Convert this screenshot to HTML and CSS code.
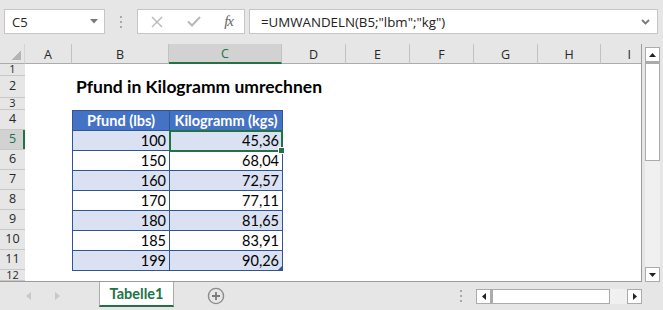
FILE: index.html
```html
<!doctype html>
<html lang="de">
<head>
	<meta charset="UTF-8">
	<title>Pfund in Kilogramm umrechnen</title>
	<link rel="stylesheet" href="styles.css">
</head>
<body>
	<div class="topbar">
		<div class="namebox">
			<span>C5</span>
			<svg class="caret" width="8" height="5" viewBox="0 0 8 5"><path d="M0 0H8L4 4.5Z" fill="#7a7a7a"/></svg>
		</div>
		<div class="grip"><i></i><i></i><i></i></div>
		<div class="fxbox">
			<svg width="12" height="12" viewBox="0 0 12 12"><path d="M1 1L11 11M11 1L1 11" stroke="#b8b8b8" stroke-width="1.4" fill="none"/></svg>
			<svg width="14" height="11" viewBox="0 0 14 11"><path d="M1 5.5L5 9.5L13 1" stroke="#b8b8b8" stroke-width="2" fill="none"/></svg>
			<span class="fx">fx</span>
		</div>
		<div class="formula">
			<span>=UMWANDELN(B5;"lbm";"kg")</span>
			<svg width="9" height="6" viewBox="0 0 9 6"><path d="M1 1L4.5 4.5L8 1" stroke="#7a7a7a" stroke-width="1.8" fill="none"/></svg>
		</div>
	</div>

	<div class="main">
		<div class="sheet">
			<div class="corner"></div>
			<div class="colhead">A</div>
			<div class="colhead">B</div>
			<div class="colhead active">C</div>
			<div class="colhead">D</div>
			<div class="colhead">E</div>
			<div class="colhead">F</div>
			<div class="colhead">G</div>
			<div class="colhead">H</div>
			<div class="colhead last">I</div>

			<div class="rowhead small">1</div>
			<div class="rowhead">2</div>
			<div class="rowhead small">3</div>
			<div class="rowhead">4</div>
			<div class="rowhead active">5</div>
			<div class="rowhead">6</div>
			<div class="rowhead">7</div>
			<div class="rowhead">8</div>
			<div class="rowhead">9</div>
			<div class="rowhead">10</div>
			<div class="rowhead">11</div>
			<div class="rowhead small">12</div>

			<div class="title">Pfund in Kilogramm umrechnen</div>

			<table class="data">
				<colgroup><col class="colb"><col class="colc"></colgroup>
				<tr class="head"><th>Pfund (lbs)</th><th>Kilogramm (kgs)</th></tr>
				<tr class="odd"><td>100</td><td class="sel">45,36</td></tr>
				<tr><td>150</td><td>68,04</td></tr>
				<tr class="odd"><td>160</td><td>72,57</td></tr>
				<tr><td>170</td><td>77,11</td></tr>
				<tr class="odd"><td>180</td><td>81,65</td></tr>
				<tr><td>185</td><td>83,91</td></tr>
				<tr class="odd"><td>199</td><td class="end">90,26</td></tr>
			</table>
		</div>

		<div class="vscroll">
			<div class="btn"><svg width="7" height="4" viewBox="0 0 7 4"><path d="M0 4H7L3.5 0Z" fill="#222"/></svg></div>
			<div class="vthumb"></div>
			<div class="track"></div>
			<div class="btn"><svg width="7" height="4" viewBox="0 0 7 4"><path d="M0 0H7L3.5 4Z" fill="#222"/></svg></div>
		</div>
	</div>

	<div class="bottombar">
		<div class="tabnav">
			<svg width="5" height="8" viewBox="0 0 5 8"><path d="M5 0V8L0 4Z" fill="#c8c8c8"/></svg>
			<svg width="5" height="8" viewBox="0 0 5 8"><path d="M0 0V8L5 4Z" fill="#c8c8c8"/></svg>
		</div>
		<div class="tab">Tabelle1</div>
		<div class="addsheet">
			<svg width="18" height="18" viewBox="0 0 18 18"><circle cx="9" cy="9" r="7.6" stroke="#8a8a8a" stroke-width="1.4" fill="none"/><path d="M9 5V13M5 9H13" stroke="#7a7a7a" stroke-width="1.8"/></svg>
		</div>
		<div class="grip2"><i></i><i></i><i></i></div>
		<div class="hscroll">
			<div class="btn"><svg width="4" height="7" viewBox="0 0 4 7"><path d="M4 0V7L0 3.5Z" fill="#222"/></svg></div>
			<div class="hthumb"></div>
			<div class="htrack"></div>
			<div class="btn"><svg width="4" height="7" viewBox="0 0 4 7"><path d="M0 0V7L4 3.5Z" fill="#222"/></svg></div>
		</div>
	</div>
</body>
</html>
```

FILE: styles.css
```css
html, body{
	margin: 0;
	padding: 0;
}
body{
	width: 663px;
	height: 310px;
	overflow: hidden;
	background: #e6e6e6;
	font-family: "Open Sans", "Noto Sans", sans-serif;
	color: #262626;
}

/* formula bar */
.topbar{
	height: 44px;
	box-sizing: border-box;
	padding: 9px 0 0 4px;
	display: flex;
	align-items: flex-start;
}
.namebox{
	width: 101px;
	height: 25px;
	box-sizing: border-box;
	background: #fff;
	border: 1px solid #c6c6c6;
	display: flex;
	align-items: center;
	justify-content: space-between;
	padding: 0 6px 0 7px;
	font-size: 13px;
}
.grip{
	width: 32px;
	height: 25px;
	display: flex;
	flex-direction: column;
	align-items: center;
	justify-content: center;
	gap: 3px;
}
.grip i, .grip2 i{
	display: block;
	width: 2px;
	height: 2px;
	background: #a8a8a8;
}
.fxbox{
	width: 108px;
	height: 25px;
	box-sizing: border-box;
	background: #fff;
	border: 1px solid #c6c6c6;
	display: flex;
	align-items: center;
	justify-content: space-between;
	padding: 0 11px 0 13px;
}
.fx{
	font-family: "Liberation Serif", serif;
	font-style: italic;
	font-size: 15px;
	color: #666;
	letter-spacing: -1px;
}
.formula{
	width: 409px;
	height: 25px;
	margin-left: 4px;
	box-sizing: border-box;
	background: #fff;
	border: 1px solid #c6c6c6;
	display: flex;
	align-items: center;
	justify-content: space-between;
	padding: 0 7px 0 11px;
	font-size: 13.3px;
	color: #222;
}

/* sheet */
.main{
	display: flex;
	height: 238px;
}
.sheet{
	width: 642px;
	box-sizing: border-box;
	border-right: 1px solid #9c9c9c;
	border-bottom: 1px solid #9c9c9c;
	background: #fff;
	display: grid;
	grid-template-columns: 25px 47px 97px 113px 64px 64px 64px 64px 63px 40px;
	grid-template-rows: 20px 12px 22px 12px repeat(8, 20px) 11px;
	overflow: hidden;
}
.corner{
	background: #e6e6e6 linear-gradient(135deg, transparent 62%, #b4b4b4 62%) no-repeat right 3px bottom 3px / 13px 13px;
	border-bottom: 1px solid #ababab;
	border-right: 1px solid #d4d4d4;
}
.colhead{
	background: #e6e6e6;
	border-right: 1px solid #c2c2c2;
	border-bottom: 1px solid #ababab;
	display: flex;
	align-items: center;
	justify-content: center;
	font-size: 12.5px;
	padding-top: 1px;
}
.colhead.last{
	border-right: none;
	justify-content: flex-end;
	padding-right: 10px;
}
.colhead.active{
	background: #d2d2d2;
	color: #217346;
	border-bottom: 2px solid #217346;
}
.rowhead{
	grid-column: 1;
	background: #e6e6e6;
	border-bottom: 1px solid #c8c8c8;
	display: flex;
	align-items: center;
	justify-content: center;
	font-size: 12.5px;
	line-height: 1;
	overflow: hidden;
}
.rowhead.small{
	align-items: flex-start;
	font-size: 11px;
	line-height: 10px;
}
.rowhead.active{
	background: #d2d2d2;
	color: #217346;
	box-shadow: inset -2px 0 0 #217346;
}
.title{
	grid-column: 3 / 8;
	grid-row: 3;
	font-family: Lato, sans-serif;
	font-weight: bold;
	font-size: 17.5px;
	color: #000;
	padding-left: 4px;
	line-height: 22px;
}

/* data table */
.data{
	grid-column: 3 / 5;
	grid-row: 5 / 13;
	align-self: start;
	border-collapse: collapse;
	table-layout: fixed;
	width: 210px;
	height: 161px;
	font-family: Lato, sans-serif;
	font-size: 14.5px;
	color: #000;
}
.colb{
	width: 97px;
}
.colc{
	width: 113px;
}
.data th, .data td{
	border: 1px solid #2f5597;
	height: 19px;
	padding: 0 3px;
	line-height: 19px;
	white-space: nowrap;
}
.data th{
	background: #4472c4;
	color: #fff;
	font-weight: bold;
	text-align: center;
}
.data td{
	text-align: right;
}
.data tr.odd td{
	background: #d9e1f2;
}
.data td.sel, .data td.end{
	position: relative;
}
.data td.sel::after{
	content: "";
	position: absolute;
	left: -1px;
	top: -1px;
	right: -1px;
	bottom: -2px;
	border: 2px solid #217346;
}
.data td.sel::before{
	content: "";
	position: absolute;
	right: -3px;
	bottom: -4px;
	width: 5px;
	height: 5px;
	background: #217346;
	border: 1px solid #fff;
	z-index: 1;
}
.data td.end::after{
	content: "";
	position: absolute;
	right: 0;
	bottom: 0;
	border-style: solid;
	border-width: 0 0 4px 4px;
	border-color: transparent transparent #2f5597 transparent;
}

/* scrollbars */
.vscroll{
	width: 21px;
	box-sizing: border-box;
	padding: 3px 3px 0 3px;
	display: flex;
	flex-direction: column;
}
.vscroll .btn, .hscroll .btn{
	height: 15px;
	box-sizing: border-box;
	background: #fff;
	border: 1px solid #ababab;
	display: flex;
	align-items: center;
	justify-content: center;
}
.vthumb{
	height: 99px;
	box-sizing: border-box;
	background: #fff;
	border: 1px solid #ababab;
	border-top-width: 2px;
}
.track{
	flex: 1;
	background: #f0f0f0;
}

/* sheet tabs */
.bottombar{
	height: 28px;
	display: flex;
	align-items: flex-start;
}
.tabnav{
	width: 99px;
	height: 28px;
	box-sizing: border-box;
	padding-left: 26px;
	display: flex;
	align-items: center;
	gap: 24px;
}
.tab{
	width: 75px;
	height: 25px;
	box-sizing: border-box;
	background: #fff;
	border: 1px solid #ababab;
	border-top: none;
	border-bottom: 2px solid #217346;
	display: flex;
	align-items: center;
	justify-content: center;
	font-family: Lato, sans-serif;
	font-weight: bold;
	font-size: 14.5px;
	color: #217346;
}
.addsheet{
	width: 18px;
	height: 18px;
	margin: 5px 0 0 33px;
}
.grip2{
	margin: 8px 0 0 235px;
	display: flex;
	flex-direction: column;
	gap: 3px;
}
.hscroll{
	margin: 7px 0 0 14px;
	width: 166px;
	height: 15px;
	display: flex;
}
.hscroll .btn{
	width: 15px;
}
.hthumb{
	width: 119px;
	box-sizing: border-box;
	background: #fff;
	border: 1px solid #ababab;
	border-left-width: 2px;
}
.htrack{
	flex: 1;
	background: #f0f0f0;
}
```
